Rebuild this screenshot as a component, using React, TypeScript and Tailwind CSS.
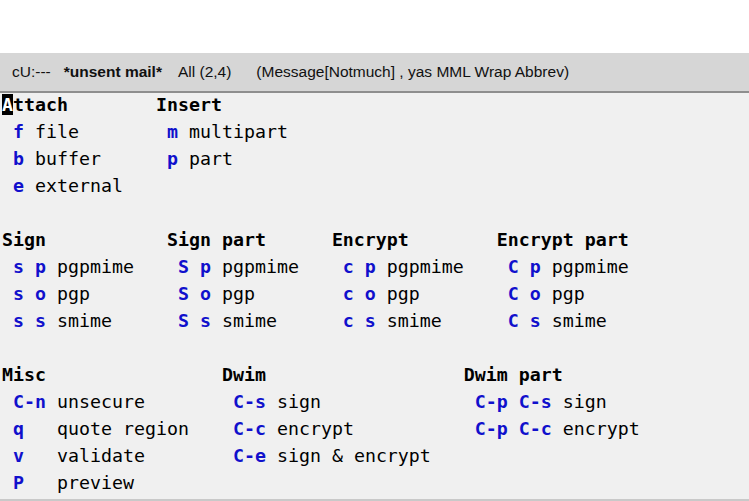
type Item = { k: string; d: string };
type Col = { title: string; w: string; items: Item[] };

const groups: Col[][] = [
  [
    {
      title: "Attach",
      w: "w-[14ch]",
      items: [
        { k: "f", d: "file" },
        { k: "b", d: "buffer" },
        { k: "e", d: "external" },
      ],
    },
    {
      title: "Insert",
      w: "w-auto",
      items: [
        { k: "m", d: "multipart" },
        { k: "p", d: "part" },
      ],
    },
  ],
  [
    {
      title: "Sign",
      w: "w-[15ch]",
      items: [
        { k: "s p", d: "pgpmime" },
        { k: "s o", d: "pgp" },
        { k: "s s", d: "smime" },
      ],
    },
    {
      title: "Sign part",
      w: "w-[15ch]",
      items: [
        { k: "S p", d: "pgpmime" },
        { k: "S o", d: "pgp" },
        { k: "S s", d: "smime" },
      ],
    },
    {
      title: "Encrypt",
      w: "w-[15ch]",
      items: [
        { k: "c p", d: "pgpmime" },
        { k: "c o", d: "pgp" },
        { k: "c s", d: "smime" },
      ],
    },
    {
      title: "Encrypt part",
      w: "w-auto",
      items: [
        { k: "C p", d: "pgpmime" },
        { k: "C o", d: "pgp" },
        { k: "C s", d: "smime" },
      ],
    },
  ],
  [
    {
      title: "Misc",
      w: "w-[20ch]",
      items: [
        { k: "C-n", d: "unsecure" },
        { k: "q  ", d: "quote region" },
        { k: "v  ", d: "validate" },
        { k: "P  ", d: "preview" },
      ],
    },
    {
      title: "Dwim",
      w: "w-[22ch]",
      items: [
        { k: "C-s", d: "sign" },
        { k: "C-c", d: "encrypt" },
        { k: "C-e", d: "sign & encrypt" },
      ],
    },
    {
      title: "Dwim part",
      w: "w-auto",
      items: [
        { k: "C-p C-s", d: "sign" },
        { k: "C-p C-c", d: "encrypt" },
      ],
    },
  ],
];

function Key({ k }: { k: string }) {
  // multi-key sequences keep the gap between keys unstyled
  const parts = k.split(" ");
  if (k.trim().length === 1) {
    return <span className="font-bold text-[#1010cc]">{k}</span>;
  }
  return (
    <>
      {parts.map((p, i) => (
        <span key={i}>
          {i > 0 && " "}
          <span className="font-bold text-[#1010cc]">{p}</span>
        </span>
      ))}
    </>
  );
}

export default function App() {
  return (
    <div className="w-[749px] h-[501px] bg-white flex flex-col overflow-hidden">
      <div className="h-[53px]" />
      <div
        className="h-[40px] bg-[#d6d6d6] border-b-2 border-[#8e8e8e] flex items-center text-[15.5px] text-[#111] whitespace-pre"
        style={{ fontFamily: '"Liberation Sans", Arial, sans-serif' }}
      >
        <span className="ml-[12px]">cU:---</span>
        <span className="ml-[13px] font-bold">*unsent mail*</span>
        <span className="ml-[16px]">All (2,4)</span>
        <span className="ml-[25px]">(Message[Notmuch] , yas MML Wrap Abbrev)</span>
      </div>
      <div
        className="flex-1 bg-[#f0f0f0] border-b-2 border-[#c9c9c9] pl-[2px] text-[18.27px] leading-[27px] text-black whitespace-pre"
        style={{ fontFamily: '"DejaVu Sans Mono", monospace' }}
      >
        <div className="relative -top-[2px]">
          {groups.map((g, gi) => (
            <div key={gi} className={gi < groups.length - 1 ? "flex mb-[27px]" : "flex"}>
              {g.map((c, ci) => (
                <div key={ci} className={`${c.w} flex flex-col`}>
                  <div className="font-bold">
                    {gi === 0 && ci === 0 ? (
                      <>
                        <span className="bg-black text-white">A</span>ttach
                      </>
                    ) : (
                      c.title
                    )}
                  </div>
                  {c.items.map((it, ii) => (
                    <div key={ii} className="pl-[1ch]">
                      <Key k={it.k} /> {it.d}
                    </div>
                  ))}
                </div>
              ))}
            </div>
          ))}
        </div>
      </div>
    </div>
  );
}
